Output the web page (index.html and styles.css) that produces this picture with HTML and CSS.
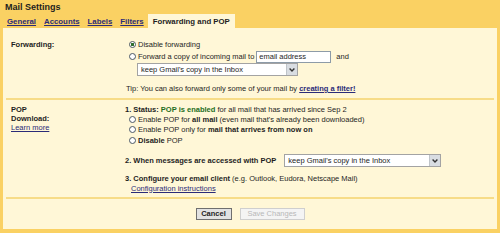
FILE: index.html
```html
<!DOCTYPE html>
<html lang="en">
<head>
    <meta charset="UTF-8">
    <title>Mail Settings</title>
<link rel="stylesheet" href="styles.css">
</head>
<body>
    <div class="title">Mail Settings</div>
    <div class="tabs">
        <a class="tab" href="#">General</a>
        <a class="tab" href="#">Accounts</a>
        <a class="tab" href="#">Labels</a>
        <a class="tab" href="#">Filters</a>
        <span class="tab active">Forwarding and POP</span>
    </div>

    <div class="panel">
        <!-- forwarding -->
        <div class="section fwd">
            <div class="label">Forwarding:</div>
            <div class="options">
                <label class="opt"><input type="radio" name="fwd" checked>Disable forwarding</label>
                <label class="opt tall"><input type="radio" name="fwd">Forward a copy of incoming mail to<input class="email" type="text" value="email address">and</label>
                <div class="selectWrap sel1">
                    <select><option>keep Gmail's copy in the Inbox</option></select>
                    <span class="arrow"><svg width="6" height="4" viewBox="0 0 6 4"><path d="M0.6 0.6 L3 3 L5.4 0.6" fill="none" stroke="#333" stroke-width="1.4"/></svg></span>
                </div>
                <div class="tip">Tip: You can also forward only some of your mail by <a class="strong" href="#">creating a filter!</a></div>
            </div>
        </div>

        <!-- pop -->
        <div class="section pop">
            <div class="label">POP<br>Download:<br><a class="learn" href="#">Learn more</a></div>
            <div class="options">
                <div class="line"><b>1. Status: <span class="green">POP is enabled</span></b> for all mail that has arrived since Sep 2</div>
                <label class="opt"><input type="radio" name="pop">Enable POP for&nbsp;<b>all mail</b>&nbsp;(even mail that's already been downloaded)</label>
                <label class="opt"><input type="radio" name="pop">Enable POP only for&nbsp;<b>mail that arrives from now on</b></label>
                <label class="opt"><input type="radio" name="pop"><b>Disable</b>&nbsp;POP</label>
                <div class="when">
                    <b>2. When messages are accessed with POP</b>
                    <div class="selectWrap sel2">
                        <select><option>keep Gmail's copy in the Inbox</option></select>
                        <span class="arrow"><svg width="6" height="4" viewBox="0 0 6 4"><path d="M0.6 0.6 L3 3 L5.4 0.6" fill="none" stroke="#333" stroke-width="1.4"/></svg></span>
                    </div>
                </div>
                <div class="line cfg"><b>3. Configure your email client</b> (e.g. Outlook, Eudora, Netscape Mail)</div>
                <a class="cfgLink" href="#">Configuration instructions</a>
            </div>
        </div>

        <div class="buttons">
            <button class="cancel">Cancel</button>
            <button class="save" disabled>Save Changes</button>
        </div>
    </div>
</body>
</html>
```

FILE: styles.css
```css
/* Gmail settings page */
body {
  margin: 0;
  background: #fad163;
  font-family: "Liberation Sans", Arial, sans-serif;
  font-size: 7.5px;
  color: #1e1e1e;
}

a {
  color: #2b2b78;
}

.title {
  height: 13px;
  padding: 1px 0 0 5px;
  font-size: 9px;
  font-weight: bold;
  line-height: 13px;
}

.tabs {
  display: flex;
  height: 14px;
  padding-left: 3px;
}

.tab {
  padding: 2px 4px 0;
  font-size: 7.8px;
  font-weight: bold;
  line-height: 12px;
  color: #2b2b78;
}

.tab.active {
  padding: 2px 5px 0;
  background: #fff7d7;
  color: #1e1e1e;
}

.panel {
  margin: 0 3px 4px;
  background: #fff7d7;
}

.section {
  display: grid;
  grid-template-columns: 114px 1fr;
  margin: 0 3px;
}

.fwd {
  padding: 11px 0 5px 5px;
}

.pop {
  padding: 5px 0 4.5px 5px;
  border-top: 2px solid #f7dc87;
}

.label {
  font-weight: bold;
  line-height: 9px;
}

.fwd .label {
  padding-top: 1px;
}

.learn {
  font-weight: normal;
}

.opt {
  display: flex;
  align-items: center;
  height: 11px;
  white-space: nowrap;
}

.opt.tall {
  height: 13px;
}

.pop .opt {
  height: 10.5px;
}

input[type=radio] {
  appearance: none;
  box-sizing: border-box;
  width: 7px;
  height: 7px;
  margin: 0 2px 0 4px;
  border: 1px solid #4b5865;
  border-radius: 50%;
  background: #fff;
}

input[type=radio]:checked {
  background: radial-gradient(circle, #2f6f2f 0 1.4px, #fff 1.9px);
}

.email {
  box-sizing: border-box;
  width: 75px;
  height: 12px;
  margin: 0 5px 0 2px;
  padding: 0 2px;
  border: 1px solid #8d9ba8;
  background: #fff;
  font: inherit;
  color: #1e1e1e;
}

.selectWrap {
  position: relative;
  height: 13px;
}

.selectWrap select {
  appearance: none;
  box-sizing: border-box;
  width: 100%;
  height: 100%;
  padding: 0 0 0 3px;
  border: 1px solid #a3a3a3;
  background: #fff;
  font: inherit;
  color: #1e1e1e;
}

.arrow {
  position: absolute;
  top: 1px;
  right: 1px;
  bottom: 1px;
  width: 10px;
  display: flex;
  align-items: center;
  justify-content: center;
  background: #d9dde2;
  border-left: 1px solid #bfc4c9;
}

.sel1 {
  width: 161px;
  margin-left: 12px;
}

.sel2 {
  width: 157px;
  margin-left: 8px;
}

.tip {
  margin-top: 8px;
  line-height: 9px;
  padding-left: 1px;
}

.strong {
  font-weight: bold;
}

.line {
  line-height: 9px;
  white-space: nowrap;
}

.green {
  color: #1d6e1d;
}

.when {
  display: flex;
  align-items: center;
  height: 13px;
  margin-top: 8.5px;
  white-space: nowrap;
}

.cfg {
  margin-top: 6.5px;
}

.cfgLink {
  display: inline-block;
  margin: 1px 0 0 6px;
  line-height: 9px;
}

.buttons {
  display: flex;
  justify-content: center;
  gap: 8px;
  margin: 0 3px;
  padding: 9px 0;
  border-top: 2px solid #f7dc87;
}

.buttons button {
  height: 12px;
  padding: 0;
  font: inherit;
  line-height: 10px;
}

.buttons .cancel {
  width: 36px;
  border: 1px solid #6f6f6f;
  background: #e2e2e2;
  color: #1e1e1e;
  font-weight: bold;
}

.buttons .save {
  width: 65px;
  border: 1px solid #cfcfcf;
  background: #f4f4f4;
  color: #b8b8b8;
}
```
